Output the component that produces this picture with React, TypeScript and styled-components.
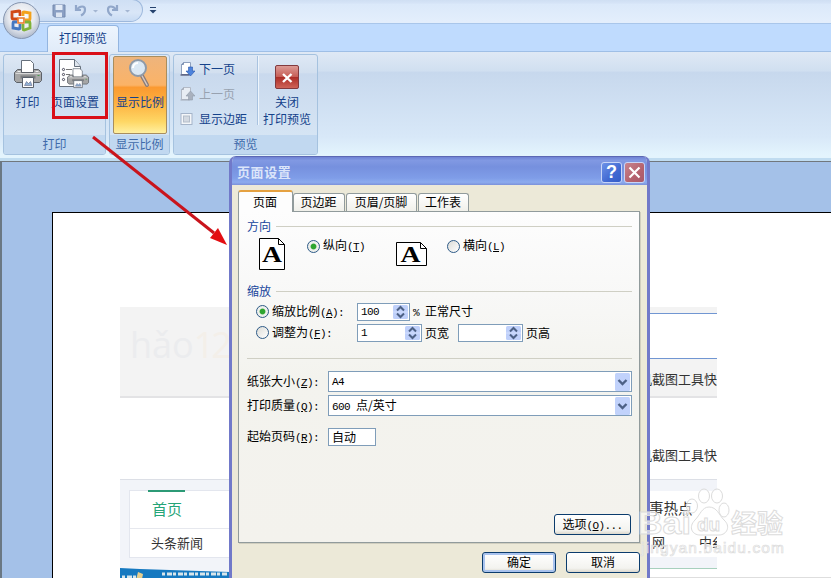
import React from "react";
import styled, { createGlobalStyle, css } from "styled-components";

const Global = createGlobalStyle`
  * { box-sizing: border-box; }
  html, body, #root { margin: 0; height: 100%; overflow: hidden; }
  body { font: 12px/14px "Noto Sans CJK SC", sans-serif; color: #000; }
`;

const Window = styled.div`
  position: relative;
  width: 831px;
  height: 578px;
  overflow: hidden;
  display: flex;
  flex-direction: column;
  background: #a4c1e8;
`;

/* ---------- Quick access bar and tab strip ---------- */
const TopBar = styled.header`
  height: 24px;
  flex: none;
  display: flex;
  padding-left: 34px;
  background: linear-gradient(#cfdff3, #d6e4f7 14%, #dbe9fa 18%, #e3eefc 90%);
  border-bottom: 1px solid #a9c6ea;
`;
const QuickAccess = styled.div`
  width: 109px;
  height: 23px;
  margin-top: -1px;
  border: 1px solid #9db8dc;
  border-left: 0;
  border-radius: 0 12px 14px 0;
  background: linear-gradient(#cfdff4, #d9e6f7 60%, #c8dbf3);
`;
const TabStrip = styled.nav`
  height: 28px;
  flex: none;
  padding: 1px 0 0 47px;
  background: #bfdbfe;
  border-bottom: 1px solid #9fbfe6;
`;
const RibbonTab = styled.div`
  width: 72px;
  height: 28px;
  border: 1px solid #93b5e0;
  border-bottom: 0;
  border-radius: 4px 4px 0 0;
  background: linear-gradient(#edf5fe, #e0ebf8);
  color: #15428b;
  line-height: 24px;
  text-align: center;
`;
const OfficeButton = styled.svg`
  position: absolute;
  left: 1px;
  top: 0;
`;
const QuickIcons = styled.svg`
  display: block;
  margin: 2px 0 0 16px;
  overflow: visible;
`;

/* ---------- Ribbon ---------- */
const Ribbon = styled.section`
  height: 109px;
  flex: none;
  display: flex;
  gap: 3px;
  padding: 2px 0 0 3px;
  background: linear-gradient(#dfe9f5, #d0dff0 18%, #c7d8ed 19%, #d8e8f8 80%, #e3f4fd 97%);
  border-bottom: 3px solid #c0dcf0;
`;
const Group = styled.div<{ $w: number }>`
  width: ${p => p.$w}px;
  height: 101px;
  display: flex;
  flex-direction: column;
  border: 1px solid #a5c2df;
  border-radius: 3px;
  overflow: hidden;
  background: linear-gradient(#dee8f5, #d2dfef 18%, #c9d9ed 19%, #d9e8f6);
`;
const GroupBody = styled.div`
  height: 80px;
  display: flex;
  color: #15428b;
`;
const GroupName = styled.div`
  flex: 1;
  background: #c1d8f0;
  color: #3e6aaa;
  text-align: center;
  line-height: 17px;
  white-space: nowrap;
`;
const BigButton = styled.div<{ $w: number; $hot?: boolean }>`
  width: ${p => p.$w}px;
  height: 78px;
  margin-top: 1px;
  display: flex;
  flex-direction: column;
  align-items: center;
  gap: 4px;
  padding-top: 2px;
  white-space: nowrap;
  text-align: center;
  line-height: 17px;
  svg { flex: none; }
  ${p =>
    p.$hot &&
    css`
      margin-left: 3px;
      border: 1px solid #a98e5e;
      border-radius: 2px;
      padding-top: 1px;
      background: linear-gradient(#eeb47c, #fbb367 37%, #fb9a31 40%, #fdb03f 60%, #fed765 85%, #fff0a0);
    `}
`;
const SmallList = styled.div`
  width: 84px;
  display: flex;
  flex-direction: column;
  gap: 1px;
  padding: 1px 0 0 6px;
  border-right: 1px solid #a9c3e0;
  margin: 1px 0 10px;
  box-shadow: 1px 0 #eef5fc;
`;
const SmallButton = styled.div<{ $off?: boolean }>`
  height: 24px;
  flex: none;
  display: flex;
  align-items: center;
  gap: 4px;
  color: ${p => (p.$off ? "#98a2b0" : "#15428b")};
  white-space: nowrap;
`;

/* ---------- Preview canvas ---------- */
const Canvas = styled.main`
  flex: 1;
  min-height: 0;
  border-top: 1px solid #71777c;
  border-left: 2px solid #6a7884;
  background: #a4c1e8;
  padding: 50px 0 0 50px;
`;
const Sheet = styled.article`
  height: 400px;
  border: solid #000;
  border-width: 1px 0 0 1px;
  background: #fff;
  padding: 94px 114px 0 67px;
`;
const WebPage = styled.div`
  display: grid;
  grid-template-columns: 280px minmax(0, 1fr);
  grid-template-rows: 91px 81px 99px;
  overflow: hidden;
  color: #333;
  font-size: 13px;
`;
const Masthead = styled.div`
  background: #f3f3f3;
  border-bottom: 2px solid #e3e3e5;
  padding: 15px 0 0 10px;
  font: 36px/46px "Open Sans", sans-serif;
  color: #ebecee;
  span { color: #f3efe9; letter-spacing: -3px; }
`;
const SearchArea = styled.div`
  background: #f3f3f3;
  border-bottom: 2px solid #e3e3e5;
  padding-top: 6px;
`;
const SearchBox = styled.div`
  height: 46px;
  border: solid #7196d2;
  border-width: 1px 0;
  background: #fff;
`;
const EndText = styled.p<{ $top: number }>`
  margin: ${p => p.$top}px 0 0;
  text-align: right;
  line-height: 18px;
`;
const NewsLeft = styled.div`
  background: #f2f4f9;
  border-top: 1px solid #dcdfe6;
  padding: 10px 0 0 9px;
`;
const NewsCard = styled.div`
  height: 68px;
  border: 1px solid #e3e6ee;
  background: #fff;
`;
const HomeTab = styled.div`
  width: 37px;
  height: 38px;
  margin: -1px 0 0 18px;
  border-top: 2px solid #2c9a76;
  color: #25a578;
  font-size: 15px;
  line-height: 34px;
  padding-left: 4px;
  white-space: nowrap;
`;
const Headline = styled.div`
  border-top: 1px solid #e6e8ee;
  padding-left: 21px;
  line-height: 27px;
`;
const Banner = styled.svg`
  display: block;
  margin: 10px 0 0 -9px;
`;
const NewsRight = styled.div`
  background: #f2f4f9;
  border-top: 1px solid #dcdfe6;
  padding-top: 11px;
`;
const NewsBody = styled.div`
  height: 66px;
  padding: 8px 0 0 249px;
  background: #fff;
  white-space: nowrap;
  overflow: hidden;
  font-size: 14.5px;
  line-height: 18px;
`;
const NewsLine = styled.div`
  display: flex;
  gap: 34px;
  margin: 16px 0 0 3px;
  font-size: 13px;
`;
const GreenRule = styled.div`
  height: 22px;
  margin-top: 11px;
  border-top: 1px solid #a7d0bd;
  background: #fff;
`;

/* ---------- Dialog ---------- */
const Dialog = styled.div`
  position: absolute;
  left: 229px;
  top: 156px;
  width: 421px;
  height: 430px;
  display: flex;
  flex-direction: column;
  border-radius: 7px 7px 0 0;
  background: #ece9d8;
  border: solid #7179c9;
  border-width: 0 3px;
  overflow: hidden;
`;
const TitleBar = styled.div`
  height: 29px;
  flex: none;
  margin: 0 -3px;
  padding: 2px 5px 0 8px;
  display: flex;
  align-items: center;
  gap: 2px;
  border-top: 1px solid #5c68b4;
  background: linear-gradient(#6f82d4, #8199e3 12%, #7690de 35%, #7f9de8 75%, #8cabee 90%, #7b91da);
`;
const Title = styled.div`
  flex: 1;
  color: #dbe5fa;
  font-weight: 700;
  font-size: 13px;
  letter-spacing: 0.6px;
`;
const CaptionButton = styled.div<{ $close?: boolean }>`
  width: 21px;
  height: 21px;
  border: 1px solid #c8d5f7;
  border-radius: 3px;
  display: grid;
  place-items: center;
  color: #fff;
  font: 700 18px/18px "Liberation Sans", sans-serif;
  background: ${p =>
    p.$close ? "linear-gradient(135deg,#c8848e,#b5626e 60%,#a8596b)" : "linear-gradient(135deg,#6d92e8,#4169d2 60%,#335cc8)"};
`;
const Tabs = styled.div`
  display: flex;
  align-items: flex-end;
  height: 27px;
  padding-left: 6px;
  position: relative;
  z-index: 1;
  margin-bottom: -1px;
`;
const Tab = styled.div<{ $w: number; $on?: boolean }>`
  width: ${p => p.$w}px;
  height: ${p => (p.$on ? 22 : 18)}px;
  margin: 0 1px ${p => (p.$on ? 0 : 1)}px 0;
  border: 1px solid #919b9c;
  border-bottom: 0;
  border-radius: 3px 3px 0 0;
  background: linear-gradient(#fff, #f0f0ea);
  text-align: center;
  line-height: 16px;
  padding-right: 1px;
  white-space: nowrap;
  ${p =>
    p.$on &&
    css`
      margin-right: 0;
      border-top: 2px solid #e5a141;
      background: #fdfdfd;
      line-height: 19px;
      padding-right: 1px;
    `}
`;
const Panel = styled.div`
  width: 402px;
  height: 332px;
  flex: none;
  margin-left: 6px;
  padding: 7px 7px 0 8px;
  border: 1px solid #919b9c;
  box-shadow: 1px 1px #d0cebf;
  background: linear-gradient(#fdfdfd, #f8f8f7 25%, #f3f3ee 50%, #f3f2ed);
`;
const Legend = styled.div`
  display: flex;
  align-items: center;
  gap: 5px;
  height: 14px;
  color: #17459c;
  &::after { content: ""; flex: 1; border-top: 1px solid #cfcfc4; }
`;
const Row = styled.div<{ $top?: number; $indent?: number; $h?: number }>`
  display: flex;
  align-items: center;
  height: ${p => p.$h ?? 19}px;
  margin-top: ${p => p.$top ?? 0}px;
  padding-left: ${p => p.$indent ?? 0}px;
  white-space: nowrap;
`;
const OrientationRow = styled.div`
  display: flex;
  height: 51px;
  padding: 5px 0 0 12px;
`;
const OrientationCell = styled.div<{ $w: number; $gap: number; $drop?: number }>`
  display: flex;
  align-items: flex-start;
  width: ${p => p.$w}px;
  gap: ${p => p.$gap}px;
  white-space: nowrap;
  > svg { margin-top: ${p => p.$drop ?? 0}px; flex: none; }
`;
const Choice = styled.label<{ $w?: number }>`
  display: flex;
  align-items: center;
  gap: 3px;
  width: ${p => (p.$w ? p.$w + "px" : "auto")};
`;
const Radio = styled.span<{ $on?: boolean }>`
  width: 13px;
  height: 13px;
  flex: none;
  border: 1px solid #2d5a87;
  border-radius: 50%;
  background: ${p =>
    p.$on ? "radial-gradient(circle, #2fa52f 0 2.4px, #eef0ec 3.4px)" : "linear-gradient(135deg,#dcdcd7,#fff)"};
`;
const Latin = styled.span`
  font: 11px/14px "Liberation Mono", monospace;
  letter-spacing: -0.6px;
`;
const FieldLabel = styled.div`
  width: 81px;
`;
const Field = styled.div<{ $w: number; $h?: number; $left?: number; $right?: number }>`
  width: ${p => p.$w}px;
  height: ${p => p.$h ?? 18}px;
  flex: none;
  display: flex;
  align-items: center;
  justify-content: space-between;
  margin: 0 ${p => p.$right ?? 0}px 0 ${p => p.$left ?? 0}px;
  padding: 0 1px 0 3px;
  border: 1px solid #7f9db9;
  background: #fff;
`;
const Divider = styled.div`
  margin: 16px 0 12px;
  border-top: 1px solid #cfcfc4;
`;
const PanelFooter = styled.div`
  display: flex;
  justify-content: flex-end;
  margin-top: 68px;
  padding-right: 1px;
`;
const DialogFooter = styled.div`
  display: flex;
  gap: 10px;
  justify-content: flex-end;
  padding: 9px 7px 0 0;
`;
const PushButton = styled.div<{ $w: number; $default?: boolean }>`
  width: ${p => p.$w}px;
  height: 21px;
  border: 1px solid #0b3c6d;
  border-radius: 3px;
  text-align: center;
  line-height: 18px;
  background: linear-gradient(#fff, #f3f3ef 80%, #dcd8cd);
  box-shadow: ${p => (p.$default ? "inset 0 0 0 2px #a9c3ee" : "none")};
`;

/* ---------- Annotations and watermark ---------- */
const Highlight = styled.div`
  position: absolute;
  left: 52px;
  top: 52px;
  width: 56px;
  height: 67px;
  border: 3px solid #d90f18;
`;
const Overlay = styled.svg`
  position: absolute;
  left: 0;
  top: 0;
  pointer-events: none;
`;

const Key = ({ k, tail = "" }: { k: string; tail?: string }) => (
  <Latin>(<u>{k}</u>){tail}</Latin>
);

const PrinterShape = () => (
  <g strokeWidth="1">
    <path d="M7 1h9l3 3v9H7z" fill="#fff" stroke="#66707c" />
    <path d="M3 10h4v3h12v-3h5l3 3v8l-2 2H2l-2-2v-8z" fill="#a6a6a6" stroke="#5c6168" />
    <path d="M1 14h25" stroke="#d8d8d8" />
    <path d="M3 12h3M21 12h3" stroke="#eef0f2" />
    <path d="M6 16h15v3H6z" fill="#7c7e80" />
    <path d="M8 18h11v10H8z" fill="#fff" stroke="#59616c" />
    <path d="M10 26l2-4 2 2 2-2 1.500 4z" fill="#8fb0d4" stroke="#557" strokeWidth=".5" />
    <path d="M23 16h2" stroke="#4c9a50" />
  </g>
);
const PrintIcon = () => (
  <svg width="28" height="31" viewBox="-.5 -1.500 28 31"><PrinterShape /></svg>
);
const PageSetupIcon = () => (
  <svg width="32" height="31" viewBox="1 -1 32 31">
    <path d="M1.500.5h15l6 7v20h-21z" fill="#fff" stroke="#66707c" />
    <path d="M16.500.5v7h6" fill="#dfe6ee" stroke="#66707c" />
    <g fill="#fff" stroke="#445"><circle cx="5.500" cy="10.500" r="1.100" /><circle cx="5.500" cy="15.500" r="1.100" /><circle cx="5.500" cy="20.500" r="1.100" /></g>
    <path d="M8 10.500h6M8 15.500h4" stroke="#777" />
    <g transform="translate(9.500 9) scale(.78 .7)"><PrinterShape /></g>
  </svg>
);
const ZoomIcon = () => (
  <svg width="30" height="31" viewBox="0 0 30 31">
    <path d="M16 16l6 11" stroke="#8b7c78" strokeWidth="4" strokeLinecap="round" />
    <path d="M16 16l6 11" stroke="#d6c8c2" strokeWidth="1.500" strokeLinecap="round" />
    <circle cx="13" cy="10" r="8" fill="#dbe8f4" stroke="#8f9aa8" strokeWidth="2" />
    <path d="M8 10a5 5 0 0 1 5-5" stroke="#fff" strokeWidth="2" fill="none" />
  </svg>
);
const CloseIcon = () => (
  <svg width="25" height="31" viewBox="0 -7 25 31">
    <defs>
      <linearGradient id="closeRed" x1="0" y1="0" x2="0" y2="1">
        <stop offset="0" stopColor="#dd9d98" /><stop offset=".5" stopColor="#c65c54" />
        <stop offset=".52" stopColor="#ad2e28" /><stop offset="1" stopColor="#d0665a" />
      </linearGradient>
    </defs>
    <rect x=".5" y=".5" width="23" height="23" rx="1.500" fill="url(#closeRed)" stroke="#823a3e" />
    <path d="M8 9l8.500 8M16.500 9L8 17" stroke="#fff" strokeWidth="2.400" />
  </svg>
);
const PageArrow = ({ up }: { up?: boolean }) => (
  <svg width="15" height="16" viewBox="0 0 15 16">
    <path d="M1.500 3.500l2-2H10.500v12h-9z" fill={up ? "#e8edf4" : "#fff"} stroke={up ? "#b3bac6" : "#8ea0be"} />
    <path d="M1.500 3.500h2v-2" fill="none" stroke={up ? "#a3abb8" : "#7b8fb2"} />
    <path d="M0.500 14h9" stroke={up ? "#a3abb8" : "#335"} />
    {up ? <path d="M10.500 5l4.500 5h-2.500v4h-4v-4H6z" fill="#a9b1be" stroke="#929cab" strokeWidth=".6" />
      : <path d="M10.500 15l4.500-5h-2.500V6h-4v4H6z" fill="#4d83dc" stroke="#2656ad" strokeWidth=".6" />}
  </svg>
);
const CheckIcon = () => (
  <svg width="15" height="15" viewBox="0 0 15 15">
    <rect x="1" y="1.500" width="11" height="11" fill="#f4f6f9" stroke="#a5b4c9" />
    <rect x="3.500" y="4" width="6" height="6" fill="#d3d9e1" stroke="#b4bdca" />
  </svg>
);
const PaperIcon = ({ wide }: { wide?: boolean }) => {
  const w = wide ? 31 : 26;
  const h = wide ? 24 : 32;
  return (
    <svg width={w} height={h}>
      <path d={`M.5.5H${w - 6.5}L${w - 0.5} 6.500V${h - 0.5}H.5z`} fill="#fff" stroke="#000" />
      <path d={`M${w - 6.5}.5v6h6`} fill="none" stroke="#000" />
      <text x={w / 2 - (wide ? 1 : 0)} y={h - (wide ? 4 : 8)} textAnchor="middle" textLength="20" lengthAdjust="spacingAndGlyphs" fontFamily="Liberation Serif, serif" fontWeight="700" fontSize="24">A</text>
    </svg>
  );
};
const Spin = () => (
  <svg width="15" height="14" viewBox="0 0 15 14">
    <rect width="15" height="14" rx="1.500" fill="#bfd0fa" />
    <path d="M0 7h15" stroke="#d3dffd" />
    <path d="M4 5.500L7.500 2 11 5.500M4 8.500l3.500 3.500L11 8.500" fill="none" stroke="#4d6185" strokeWidth="2" />
  </svg>
);
const Drop = () => (
  <svg width="15" height="18" viewBox="0 0 15 18">
    <rect width="15" height="18" rx="1.500" fill="#c1d2fb" />
    <path d="M3.500 7l4 4 4-4" fill="none" stroke="#4d6185" strokeWidth="2.400" />
  </svg>
);
const CloseGlyph = () => (
  <svg width="13" height="13"><path d="M1.500 1.500l10 10M11.500 1.500l-10 10" stroke="#fff" strokeWidth="2.200" /></svg>
);
const OfficeOrb = () => (
  <OfficeButton width="42" height="42" viewBox="0 0 42 42">
    <defs>
      <radialGradient id="orb" cx=".5" cy=".4" r=".6">
        <stop offset="0" stopColor="#fff" /><stop offset=".6" stopColor="#e6e9ef" /><stop offset="1" stopColor="#aeb9cb" />
      </radialGradient>
    </defs>
    <circle cx="20.500" cy="20.500" r="18" fill="url(#orb)" stroke="#8595b0" />
    <g fill="none" strokeWidth="2.800">
      <path d="M17 19h-5a1 1 0 0 1-1-1v-6l7-1a1 1 0 0 1 1 1v4" stroke="#d14a17" />
      <path d="M22 16v-3a1 1 0 0 1 1-1l6 1v6a1 1 0 0 1-1 1h-4" stroke="#f3a21c" />
      <path d="M16 22h-3a1 1 0 0 0-1 1v5l6 1a1 1 0 0 0 1-1v-4" stroke="#4478c2" />
      <path d="M24 22h4a1 1 0 0 1 1 1v5l-6 2a1 1 0 0 1-1-1v-5" stroke="#7fb23a" />
      <path d="M17 18h6v5h-6z" stroke="#ea7a2a" strokeWidth="1.600" />
    </g>
  </OfficeButton>
);
const QuickAccessDrawing = () => (
  <QuickIcons width="110" height="18" viewBox="0 0 110 18">
    <path d="M3 3h12v12H4.500L3 13.500z" fill="#8a9fc3" stroke="#7489ae" />
    <path d="M5.500 3h7v5h-7z" fill="#e3ebf7" /><path d="M6 10.500h6V15H6z" fill="#dce5f2" />
    <g fill="none" stroke="#91a7ca" strokeWidth="2.200">
      <path d="M26 3v5h5M27 7.500c3-4 8-4 8 0 0 3-2 5-4 6" />
      <path d="M67 3v5h-5M66 7.500c-3-4-8-4-8 0 0 3 2 5 4 6" />
    </g>
    <path d="M43 8h5l-2.500 2.500zM75 8h5l-2.500 2.500z" fill="#a4b6d2" />
    <path d="M100 5.500h6" stroke="#25426e" /><path d="M99.500 8h7l-3.500 3.500z" fill="#25426e" />
  </QuickIcons>
);

export default function App() {
  return (
    <>
      <Global />
      <Window>
        <TopBar><QuickAccess><QuickAccessDrawing /></QuickAccess></TopBar>
        <TabStrip><RibbonTab>打印预览</RibbonTab></TabStrip>
        <OfficeOrb />
        <Ribbon>
          <Group $w={103}>
            <GroupBody>
              <BigButton $w={47}><PrintIcon />打印</BigButton>
              <BigButton $w={48}><PageSetupIcon />页面设置</BigButton>
            </GroupBody>
            <GroupName>打印</GroupName>
          </Group>
          <Group $w={61}>
            <GroupBody><BigButton $w={54} $hot><ZoomIcon />显示比例</BigButton></GroupBody>
            <GroupName>显示比例</GroupName>
          </Group>
          <Group $w={145}>
            <GroupBody>
              <SmallList>
                <SmallButton><PageArrow />下一页</SmallButton>
                <SmallButton $off><PageArrow up />上一页</SmallButton>
                <SmallButton><CheckIcon />显示边距</SmallButton>
              </SmallList>
              <BigButton $w={58}><CloseIcon /><span>关闭<br />打印预览</span></BigButton>
            </GroupBody>
            <GroupName>预览</GroupName>
          </Group>
        </Ribbon>

        <Canvas>
          <Sheet>
            <WebPage>
              <Masthead>hǎo<span>12</span></Masthead>
              <SearchArea><SearchBox /><EndText $top={11}>机截图工具快</EndText></SearchArea>
              <div />
              <EndText $top={48}>机截图工具快</EndText>
              <NewsLeft>
                <NewsCard><HomeTab>首页</HomeTab><Headline>头条新闻</Headline></NewsCard>
                <Banner width="280" height="12" viewBox="0 0 280 12">
                  <path d="M0 0l20 1 90 3v8H0z" fill="#1679c0" />
                  <path d="M2 9h17M42 6h66" stroke="#d9e6ea" strokeWidth="3" strokeDasharray="3 2 5 1" />
                  <path d="M18 4l5 2-1 5-6 1z" fill="#e8cf8d" />
                </Banner>
              </NewsLeft>
              <NewsRight>
                <NewsBody>事热点<NewsLine><span>网</span><span>中纟</span></NewsLine></NewsBody>
                <GreenRule />
              </NewsRight>
            </WebPage>
          </Sheet>
        </Canvas>

        <Dialog>
          <TitleBar>
            <Title>页面设置</Title>
            <CaptionButton>?</CaptionButton>
            <CaptionButton $close><CloseGlyph /></CaptionButton>
          </TitleBar>
          <Tabs>
            <Tab $w={55} $on>页面</Tab>
            <Tab $w={52}>页边距</Tab>
            <Tab $w={71}>页眉/页脚</Tab>
            <Tab $w={51}>工作表</Tab>
          </Tabs>
          <Panel>
            <Legend>方向</Legend>
            <OrientationRow>
              <OrientationCell $w={137} $gap={22}>
                <PaperIcon />
                <Choice><Radio $on /><span>纵向<Key k="T" /></span></Choice>
              </OrientationCell>
              <OrientationCell $w={150} $gap={20} $drop={4}>
                <PaperIcon wide />
                <Choice><Radio /><span>横向<Key k="L" /></span></Choice>
              </OrientationCell>
            </OrientationRow>
            <Legend>缩放</Legend>
            <Row $top={4} $indent={9}>
              <Choice $w={101}><Radio $on /><span>缩放比例<Key k="A" tail=":" /></span></Choice>
              <Field $w={53} $right={3}><Latin>100</Latin><Spin /></Field>
              <span><Latin>% </Latin>正常尺寸</span>
            </Row>
            <Row $top={2} $indent={9}>
              <Choice $w={101}><Radio /><span>调整为<Key k="F" tail=":" /></span></Choice>
              <Field $w={65} $right={3}><Latin>1</Latin><Spin /></Field>
              页宽
              <Field $w={65} $left={9} $right={3}><span /><Spin /></Field>
              页高
            </Row>
            <Divider />
            <Row $h={21}><FieldLabel>纸张大小<Key k="Z" tail=":" /></FieldLabel><Field $w={304} $h={21}><Latin>A4</Latin><Drop /></Field></Row>
            <Row $h={21} $top={3}><FieldLabel>打印质量<Key k="Q" tail=":" /></FieldLabel><Field $w={304} $h={21}><span><Latin>600 </Latin>点/英寸</span><Drop /></Field></Row>
            <Row $top={11}><FieldLabel>起始页码<Key k="R" tail=":" /></FieldLabel><Field $w={48} $h={18}>自动</Field></Row>
            <PanelFooter><PushButton $w={77}>选项<Key k="O" tail="..." /></PushButton></PanelFooter>
          </Panel>
          <DialogFooter>
            <PushButton $w={74} $default>确定</PushButton>
            <PushButton $w={74}>取消</PushButton>
          </DialogFooter>
        </Dialog>

        <Highlight />
        <Overlay width="831" height="578">
          <path d="M93 137L214 233" stroke="#c9141c" strokeWidth="3" />
          <path d="M227 245L210 238L218 228z" fill="#e30e12" />
          <path d="M650 577.500h181" stroke="#dedede" />
          <g fill="#fff" fillOpacity=".6" stroke="#dcdcdc" strokeWidth="1">
            <ellipse cx="692" cy="506" rx="5.500" ry="7" /><ellipse cx="704" cy="496" rx="5.500" ry="7" />
            <ellipse cx="717" cy="496" rx="5.500" ry="7" /><ellipse cx="724" cy="510" rx="5" ry="7" />
            <path d="M709 507c8 0 10 8 15 13 7 6 3 15-5 15h-19c-8 0-12-8-5-15 5-5 7-13 14-13z" />
            <text x="638" y="534" fontFamily="Liberation Sans, sans-serif" fontWeight="700" fontSize="32" textLength="53" lengthAdjust="spacingAndGlyphs">Bai</text>
            <text x="697" y="531" fontFamily="Liberation Sans, sans-serif" fontWeight="700" fontSize="19">du</text>
            <text x="731" y="533" fontFamily="Noto Sans CJK SC, sans-serif" fontWeight="700" fontSize="26">经验</text>
            <text x="641" y="553" fontFamily="Liberation Sans, sans-serif" fontSize="15.500" textLength="143" strokeWidth=".7">jingyan.baidu.com</text>
          </g>
        </Overlay>
      </Window>
    </>
  );
}
